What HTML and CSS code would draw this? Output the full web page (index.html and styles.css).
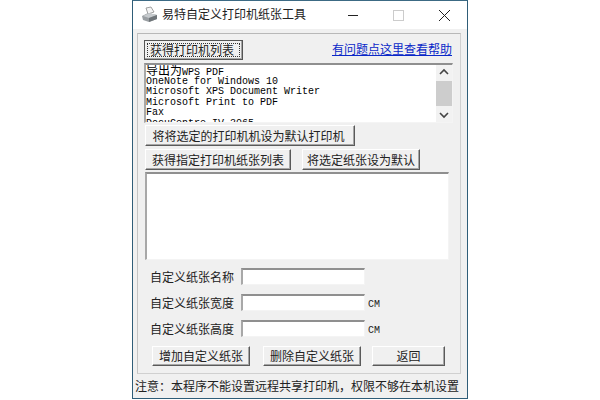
FILE: index.html
```html
<!DOCTYPE html>
<html lang="zh-CN">
<head>
  <meta charset="UTF-8">
  <title>易特自定义打印机纸张工具</title>
  <link rel="stylesheet" href="styles.css">
</head>
<body>
  <div class="window">
    <div class="titlebar">
      <svg class="app-icon" width="18" height="18" viewBox="0 0 18 18">
        <path d="M5 2 L10 1 L13 6 L7 8 Z" fill="#f4f4f4" stroke="#8a8a8a" stroke-width="0.8"/>
        <path d="M1 10 L7 7 L16 9 L16 13 L8 16 L2 14 Z" fill="#9a9fa3"/>
        <path d="M2 10 L8 12 L16 9 L8 7 Z" fill="#c6cacd"/>
        <path d="M8 12 L8 16 L16 13 L16 9 Z" fill="#6f7579"/>
      </svg>
      <span class="title">易特自定义打印机纸张工具</span>
      <svg class="controls" width="104" height="12" viewBox="0 0 104 12">
        <path d="M0 6.5 H10" stroke="#222" fill="none"/>
        <rect x="45.5" y="1.5" width="10" height="10" stroke="#ccc" fill="none"/>
        <path d="M91 1 L102 12 M102 1 L91 12" stroke="#222" fill="none"/>
      </svg>
    </div>

    <div class="group">
      <div class="row-top">
        <button class="btn btn-focus btn-list">获得打印机列表</button>
        <a class="help-link">有问题点这里查看帮助</a>
      </div>

      <div class="listbox printers">
        <div class="items">
          <div class="first"><span class="cjk">导出为</span>WPS PDF</div>
          <div>OneNote for Windows 10</div>
          <div>Microsoft XPS Document Writer</div>
          <div>Microsoft Print to PDF</div>
          <div>Fax</div>
          <div>DocuCentre-IV 3065</div>
        </div>
        <div class="scrollbar">
          <svg width="16" height="14" viewBox="0 0 16 14"><path d="M4 9 L8 5 L12 9" stroke="#444" stroke-width="1.6" fill="none"/></svg>
          <div class="thumb"></div>
          <svg width="16" height="14" viewBox="0 0 16 14"><path d="M4 5 L8 9 L12 5" stroke="#444" stroke-width="1.6" fill="none"/></svg>
        </div>
      </div>

      <div class="inner">
        <button class="btn btn-default">将将选定的打印机机设为默认打印机</button>
        <div class="row-papers">
          <button class="btn btn-papers">获得指定打印机纸张列表</button>
          <button class="btn btn-setpaper">将选定纸张设为默认</button>
        </div>
        <div class="listbox papers"></div>

        <div class="form">
          <div class="field">
            <label>自定义纸张名称</label>
            <input type="text" class="input">
          </div>
          <div class="field">
            <label>自定义纸张宽度</label>
            <input type="text" class="input">
            <span class="unit">CM</span>
          </div>
          <div class="field">
            <label>自定义纸张高度</label>
            <input type="text" class="input">
            <span class="unit">CM</span>
          </div>
        </div>

        <div class="row-actions">
          <button class="btn btn-action">增加自定义纸张</button>
          <button class="btn btn-action">删除自定义纸张</button>
          <button class="btn btn-back">返回</button>
        </div>
      </div>
    </div>

    <p class="notice">注意&#xFF1A;本程序不能设置远程共享打印机&#xFF0C;权限不够在本机设置</p>
  </div>
</body>
</html>
```

FILE: styles.css
```css
html, body {
  margin: 0;
  height: 400px;
  overflow: hidden;
  background: #fff;
}
body {
  font-family: "Noto Sans CJK SC", sans-serif;
  font-size: 12px;
  color: #222;
}
.window {
  box-sizing: border-box;
  width: 336px;
  height: 399px;
  margin-left: 132px;
  background: #f0f0f0;
  border: 1px solid #2f5d78;
  border-top-color: #3c6a84;
}
.titlebar {
  display: flex;
  align-items: center;
  height: 28px;
  background: #fff;
  padding-left: 8px;
}
.app-icon {
  flex: none;
}
.title {
  margin-left: 3px;
  line-height: 26px;
  height: 28px;
}
.controls {
  margin-left: 42px;
  flex: none;
}
.group {
  box-sizing: border-box;
  width: 324px;
  height: 341px;
  margin: 4px 0 0 4px;
  padding: 6px 0 0 6px;
  border: 1px solid #d0d0d0;
  border-top-color: #b8b8b8;
  border-left-color: #c4c4c4;
}
.row-top {
  display: flex;
  justify-content: space-between;
  align-items: center;
  width: 308px;
}
.help-link {
  color: #0a28c8;
  text-decoration: underline;
  line-height: 16px;
  margin-bottom: 2px;
}
.btn {
  box-sizing: border-box;
  height: 21px;
  padding: 0;
  font: inherit;
  line-height: 16px;
  color: #222;
  background: #f0f0f0;
  border: 1px solid;
  border-color: #fff #5a5a5a #5a5a5a #fff;
  box-shadow: inset -1px -1px 0 #a6a6a6;
}
.btn-list {
  width: 99px;
  height: 20px;
  padding-right: 3px;
}
.btn-focus {
  border-color: #555;
  outline: 1px dotted #333;
  outline-offset: -4px;
}
.btn-default {
  display: block;
  width: 210px;
  padding-right: 3px;
}
.btn-papers {
  width: 146px;
}
.btn-setpaper {
  width: 118px;
}
.btn-action {
  width: 98px;
  height: 20px;
}
.btn-back {
  width: 73px;
  height: 20px;
}
.listbox {
  box-sizing: border-box;
  background: #fff;
  border: 1px solid #f4f4f4;
  border-top: 2px solid #8f8f8f;
  border-left: 2px solid #a8a8a8;
}
.printers {
  display: flex;
  width: 309px;
  height: 60px;
  margin-top: 3px;
  overflow: hidden;
}
.items {
  flex: 1;
  overflow: hidden;
  font-family: "Liberation Mono", monospace;
  font-size: 10px;
  line-height: 10.4px;
  color: #000;
  white-space: nowrap;
}
.items .first {
  height: 12px;
  line-height: 9px;
}
.cjk {
  font-family: "Noto Sans CJK SC", sans-serif;
  font-size: 12px;
  line-height: 9px;
}
.scrollbar {
  display: flex;
  flex-direction: column;
  justify-content: space-between;
  width: 16px;
  background: #f2f2f2;
}
.scrollbar svg {
  display: block;
}
.thumb {
  flex: none;
  height: 25px;
  background: #cdcdcd;
}
.inner {
  padding-left: 1px;
}
.inner > .btn-default {
  margin-top: 2px;
}
.row-papers {
  display: flex;
  gap: 11px;
  margin-top: 3px;
}
.papers {
  width: 304px;
  height: 88px;
  margin-top: 2px;
}
.form {
  margin-top: 8px;
  padding-left: 5px;
}
.field {
  display: flex;
  align-items: center;
  height: 17px;
  margin-bottom: 9px;
}
.field label {
  width: 91px;
  flex: none;
}
.input {
  box-sizing: border-box;
  width: 124px;
  height: 17px;
  padding: 0;
  background: #fff;
  border: 1px solid #f4f4f4;
  border-top: 2px solid #8f8f8f;
  border-left: 2px solid #a8a8a8;
  outline: none;
}
.unit {
  font-family: "Liberation Mono", monospace;
  font-size: 10px;
  margin: 4px 0 0 3px;
}
.row-actions {
  display: flex;
  gap: 13px;
  margin: 0 0 0 7px;
}
.row-actions .btn-back {
  margin-left: -2px;
}
.notice {
  margin: 5px 0 0 2px;
  line-height: 13px;
  white-space: nowrap;
}
```
